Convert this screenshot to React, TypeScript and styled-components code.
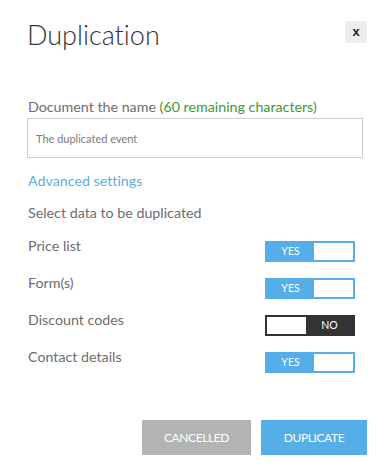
import React, { useState } from "react";
import styled, { createGlobalStyle } from "styled-components";

const Global = createGlobalStyle`
  html, body { margin: 0; padding: 0; background: #fff; }
  body {
    font-family: Lato, "Open Sans", sans-serif;
    color: #6d6d6d;
    font-variant-ligatures: none;
    font-feature-settings: "liga" 0;
  }
  * { box-sizing: border-box; }
`;

const Dialog = styled.div`
  width: 387px;
  min-height: 465px;
  padding: 21px 20px 0 28px;
  display: flex;
  flex-direction: column;
  & > * { flex-shrink: 0; }
`;

const Header = styled.div`
  display: flex;
  justify-content: space-between;
  align-items: flex-start;
`;

const Title = styled.h1`
  margin: 0 0 0 -1px;
  font-size: 27px;
  font-weight: 300;
  line-height: 28px;
  color: #333;
  font-variant-ligatures: none;
`;

const Close = styled.button`
  width: 22px;
  height: 22px;
  border: none;
  padding: 0;
  background: #eeeeee;
  color: #222;
  font-family: "Liberation Sans", sans-serif;
  font-weight: bold;
  font-size: 13px;
  line-height: 20px;
  cursor: pointer;
`;

const Text = styled.div`
  font-size: 14.25px;
  line-height: 20px;
  color: #6d6d6d;
`;

const Label = styled(Text)`
  margin-top: 48px;
`;

const Count = styled.span`
  color: #3c9a34;
`;

const Input = styled.input`
  margin-top: 1px;
  width: 336px;
  height: 40px;
  margin-left: -1px;
  border: 1px solid #cccccc;
  padding: 0 8px;
  font-family: Lato, sans-serif;
  font-size: 11px;
  color: #666;
  outline: none;
  &::placeholder { color: #7a7a7a; }
`;

const Link = styled.a`
  margin-top: 13px;
  font-size: 14.25px;
  line-height: 20px;
  color: #5aafe8;
  text-decoration: none;
  cursor: pointer;
`;

const Section = styled(Text)`
  margin-top: 12px;
`;

const Rows = styled.div`
  margin-top: 13px;
  display: flex;
  flex-direction: column;
  padding-right: 12px;
`;

const Row = styled.div`
  height: 37px;
  display: flex;
  justify-content: space-between;
  align-items: flex-start;
`;

const RowLabel = styled.span`
  font-size: 14.25px;
  line-height: 20px;
  color: #6d6d6d;
`;

const Toggle = styled.button<{ $on: boolean }>`
  margin-top: 5px;
  width: 90px;
  height: 21px;
  padding: 2px;
  border: none;
  display: flex;
  flex-direction: ${(p) => (p.$on ? "row" : "row-reverse")};
  background: ${(p) => (p.$on ? "#55aee8" : "#333333")};
  cursor: pointer;
`;

const ToggleText = styled.span`
  flex: 1;
  font-family: Lato, sans-serif;
  font-size: 10.5px;
  line-height: 17px;
  color: #fff;
  text-align: center;
`;

const Knob = styled.span`
  width: 39px;
  height: 17px;
  background: #fff;
`;

const Footer = styled.div`
  margin-top: 36px;
  display: flex;
  justify-content: flex-end;
  gap: 10px;
`;

const Btn = styled.button<{ $primary?: boolean; $w: number }>`
  width: ${(p) => p.$w}px;
  height: 35px;
  border: none;
  background: ${(p) => (p.$primary ? "#55aee8" : "#b3b3b3")};
  color: #fff;
  font-family: Lato, sans-serif;
  font-size: 12px;
  letter-spacing: -0.4px;
  text-transform: uppercase;
  cursor: pointer;
`;

const items: { label: string; on: boolean }[] = [
  { label: "Price list", on: true },
  { label: "Form(s)", on: true },
  { label: "Discount codes", on: false },
  { label: "Contact details", on: true },
];

export default function App() {
  const [state, setState] = useState(items.map((i) => i.on));
  return (
    <>
      <Global />
      <Dialog>
        <Header>
          <Title>Duplication</Title>
          <Close>x</Close>
        </Header>
        <Label>
          Document the name <Count>(60 remaining characters)</Count>
        </Label>
        <Input placeholder="The duplicated event" />
        <Link>Advanced settings</Link>
        <Section>Select data to be duplicated</Section>
        <Rows>
          {items.map((it, i) => (
            <Row key={it.label}>
              <RowLabel>{it.label}</RowLabel>
              <Toggle
                $on={state[i]}
                onClick={() => setState((s) => s.map((v, j) => (j === i ? !v : v)))}
              >
                <ToggleText>{state[i] ? "YES" : "NO"}</ToggleText>
                <Knob />
              </Toggle>
            </Row>
          ))}
        </Rows>
        <Footer>
          <Btn $w={109}>Cancelled</Btn>
          <Btn $w={106} $primary>Duplicate</Btn>
        </Footer>
      </Dialog>
    </>
  );
}
